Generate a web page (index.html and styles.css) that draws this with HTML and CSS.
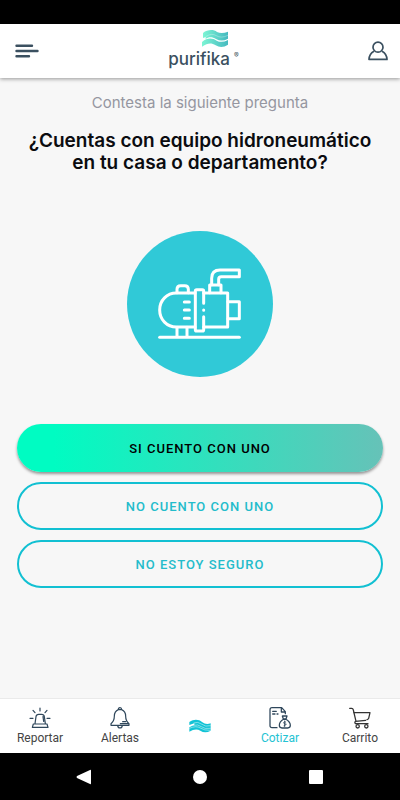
FILE: index.html
```html
<!DOCTYPE html>
<html lang="es">
<head>
  <meta charset="utf-8">
  <meta name="viewport" content="width=device-width, initial-scale=1">
  <title>Purifika</title>
  <link rel="stylesheet" href="styles.css">
</head>
<body>

  <div class="status-bar"></div>

  <header class="header">
    <button type="button" class="icon-btn" aria-label="Menú">
      <svg width="24" height="14" viewBox="0 0 24 14" fill="none" stroke="#3b5060" stroke-width="2.4" stroke-linecap="round">
        <path d="M1.5 1.8H17M1.5 7H22.5M1.5 12.2H14"/>
      </svg>
    </button>

    <a href="#" class="logo">
      <svg class="logo-wave" width="28" height="18" viewBox="0 0 84 54">
        <defs>
          <linearGradient id="wave" x1="0" x2="1">
            <stop offset="0" stop-color="#7df5d4"/>
            <stop offset="1" stop-color="#45b9bf"/>
          </linearGradient>
        </defs>
        <path fill="url(#wave)" d="M6 9C20-2 38-2 48 6Q62 13 81 5V26Q62 37 45 27C34 20 22 20 14 27V21L6 24Z"/>
        <path fill="url(#wave)" d="M3 36C21 21 35 25 47 32Q62 40 81 30V44Q62 57 44 46C29 37 20 40 3 50Z"/>
        <path fill="none" stroke="#fff" stroke-opacity="0.6" stroke-width="1.5" d="M14 20Q32 8 46 17T81 16"/>
      </svg>
      <span class="logo-name">purifika<sup>®</sup></span>
    </a>

    <button type="button" class="icon-btn" aria-label="Mi cuenta">
      <svg width="20" height="20" viewBox="0 0 20 20" fill="none" stroke="#3b5060" stroke-width="1.7" stroke-linejoin="round">
        <circle cx="10" cy="6.2" r="5"/>
        <path d="M6 10.2C3 11.8 1.2 14.6 1 18.4H19C18.8 14.6 17 11.8 14 10.2"/>
      </svg>
    </button>
  </header>

  <main class="content">
    <p class="subtitle">Contesta la siguiente pregunta</p>
    <h1 class="question">¿Cuentas con equipo hidroneumático en tu casa o departamento?</h1>

    <svg class="pump" width="146" height="146" viewBox="24 18 438 438" fill="none" stroke="#fff" stroke-width="9" stroke-linecap="round" stroke-linejoin="round">
      <circle cx="243" cy="237" r="219" fill="#30c9d7" stroke="none"/>
      <path d="M122 337H361"/>
      <path d="M228 204H172C144 204 122 226 122 255S144 306 172 306H228"/>
      <path d="M174 203V193Q174 182 185 182H197Q208 182 208 193V203"/>
      <path d="M174 307V334M204 307V334"/>
      <path d="M196 231H211M196 255H211M196 280H211"/>
      <path d="M254 235V198Q254 194 250 194H233Q229 194 229 198V314Q229 318 233 318H250Q254 318 254 314V275M254 255V256"/>
      <path d="M254 204H326V306H254"/>
      <path d="M272 203V180H306V203"/>
      <path d="M278 179V160Q278 135 303 135H361V155H307Q299 155 299 163V179"/>
      <path d="M327 230H361V281H327"/>
    </svg>

    <div class="options">
      <button type="button" class="btn btn-primary">Si cuento con uno</button>
      <button type="button" class="btn">No cuento con uno</button>
      <button type="button" class="btn">No estoy seguro</button>
    </div>
  </main>

  <nav class="tabs">
    <a href="#" class="tab">
      <svg width="22" height="22" viewBox="0 0 66 66" fill="none" stroke="#2f475b" stroke-width="3.6" stroke-linecap="round" stroke-linejoin="round">
        <path d="M18 50L21 29Q22 22 29 22H38Q45 22 46 29L49 50M42 29L44 43M13 51H54L57 61H10ZM33 3V12M12 10L18 17M54 10L48 17M3 34H12M54 34H63"/>
      </svg>
      <span>Reportar</span>
    </a>
    <a href="#" class="tab">
      <svg width="22" height="22" viewBox="0 0 66 66" fill="none" stroke="#2f475b" stroke-width="3.6" stroke-linecap="round" stroke-linejoin="round">
        <path d="M28 8Q28 2 33 2T38 8M28 8Q16 13 16 28Q16 42 6 50V55H60V50Q50 42 50 28Q50 13 38 8ZM26 56Q27 63 33 63T40 56M41 44H50M34 50H57"/>
      </svg>
      <span>Alertas</span>
    </a>
    <a href="#" class="tab" aria-label="Inicio">
      <svg width="22" height="14" viewBox="0 0 66 42">
        <path fill="#12c3d5" d="M1 9C15-1 30 1 39 9Q51 19 65 13V35Q48 45 34 35Q20 27 1 38V25Q9 20 16 18V13L1 18Z"/>
        <path fill="none" stroke="#fff" stroke-width="2" stroke-opacity="0.7" d="M14 12Q27 7 37 15Q50 25 65 20M13 19Q27 15 37 23T65 28M1 28Q22 19 34 27T65 34"/>
      </svg>
    </a>
    <a href="#" class="tab tab-active">
      <svg width="22" height="22" viewBox="0 0 66 66" fill="none" stroke="#2f475b" stroke-width="3.8" stroke-linecap="round" stroke-linejoin="round">
        <path d="M24 62H9Q3 62 3 56V8Q3 2 9 2H38L49 14V20M37 3V15H49M11 13H22M11 21H18M24 21H27"/>
        <path d="M40 27H54L51 36H43ZM43 37C35 42 31 49 31 55Q31 63 39 63H56Q64 63 64 55C64 49 59 42 51 37Z"/>
        <path stroke-width="2.6" d="M50 45Q44 43 44 47T50 51T45 56M47 42V59"/>
      </svg>
      <span>Cotizar</span>
    </a>
    <a href="#" class="tab">
      <svg width="22" height="22" viewBox="0 0 66 66" fill="none" stroke="#333" stroke-width="3.8" stroke-linecap="round" stroke-linejoin="round">
        <path d="M2 4H8Q12 4 13 9L21 43M14 17H63L59 34Q58 37 54 38M20 43Q15 47 20 50H57M20 43L50 40"/>
        <circle cx="26" cy="58" r="5"/>
        <circle cx="52" cy="58" r="5"/>
      </svg>
      <span>Carrito</span>
    </a>
  </nav>

  <div class="system-bar">
    <button type="button" class="sys-btn" aria-label="Atrás">
      <svg width="16" height="16" viewBox="0 0 16 16" fill="#fff"><path d="M14 1Q15 0 15 2V14Q15 16 14 15L1 9Q0 8 1 7Z"/></svg>
    </button>
    <button type="button" class="sys-btn" aria-label="Inicio del sistema">
      <svg width="16" height="16" viewBox="0 0 16 16" fill="#fff"><circle cx="8" cy="8" r="7"/></svg>
    </button>
    <button type="button" class="sys-btn" aria-label="Recientes">
      <svg width="16" height="16" viewBox="0 0 16 16" fill="#fff"><rect x="1" y="1" width="14" height="14" rx="1"/></svg>
    </button>
  </div>

</body>
</html>
```

FILE: styles.css
```css
* {
  box-sizing: border-box;
}

body {
  display: flex;
  flex-direction: column;
  min-height: 100vh;
  margin: 0;
  background-color: #f7f7f7;
  font-family: Roboto, sans-serif;
}

svg {
  display: block;
}

button {
  font-family: inherit;
  cursor: pointer;
}

a {
  text-decoration: none;
}

.status-bar {
  height: 24px;
  background-color: #000;
}

/* header */
.header {
  display: flex;
  align-items: center;
  justify-content: space-between;
  height: 54px;
  padding: 0 12px 0 15px;
  background-color: #fff;
  box-shadow: 0 1px 4px rgba(0, 0, 0, 0.4);
}

.icon-btn {
  display: flex;
  padding: 0;
  border: 0;
  background: none;
}

.logo {
  display: flex;
  flex-direction: column;
  align-items: center;
  padding-bottom: 3px;
  color: #3b5060;
}

.logo-wave {
  margin-left: 24px;
}

.logo-name {
  font-family: Inter, sans-serif;
  font-size: 17px;
  font-weight: 500;
  line-height: 22px;
}

.logo-name sup {
  margin-left: 4px;
  font-size: 7px;
  font-weight: 400;
  line-height: 0;
}

/* question */
.content {
  flex: 1;
  display: flex;
  flex-direction: column;
  align-items: center;
  padding: 15px 17px 24px;
  text-align: center;
}

.subtitle {
  margin: 0;
  font-family: Inter, sans-serif;
  font-size: 15px;
  line-height: 20px;
  color: #9596a0;
}

.question {
  max-width: 360px;
  margin: 17px 0 57px;
  font-family: Inter, sans-serif;
  font-size: 19px;
  font-weight: 600;
  line-height: 22px;
  color: #0b0c10;
}

.options {
  display: flex;
  flex-direction: column;
  gap: 10px;
  width: 100%;
  margin-top: 47px;
}

.btn {
  height: 48px;
  border: 2px solid #12c0d2;
  border-radius: 24px;
  background: none;
  color: #24bccb;
  font-size: 13px;
  font-weight: 500;
  letter-spacing: 1px;
  text-transform: uppercase;
}

.btn-primary {
  border: 0;
  background: linear-gradient(to right, #00fcc2 10%, #66c2b8);
  box-shadow: 0 2px 3px rgba(0, 0, 0, 0.4);
  color: #000;
}

/* bottom tabs */
.tabs {
  display: grid;
  grid-template-columns: repeat(5, 1fr);
  height: 55px;
  border-top: 1px solid #eaeaea;
  background-color: #fff;
}

.tab {
  display: flex;
  flex-direction: column;
  align-items: center;
  justify-content: center;
  gap: 1px;
  color: #444;
  font-size: 12px;
  line-height: 16px;
}

.tab-active {
  color: #24c3d3;
}

.system-bar {
  display: flex;
  align-items: center;
  justify-content: center;
  gap: 100px;
  height: 47px;
  background-color: #000;
}

.sys-btn {
  padding: 0;
  border: 0;
  background: none;
}
```
